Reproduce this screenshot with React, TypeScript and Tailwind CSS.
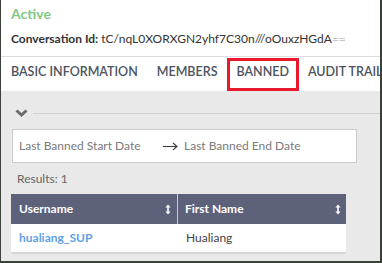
import React from "react";

const TABS = ["BASIC INFORMATION", "MEMBERS", "BANNED", "AUDIT TRAIL"];
const ACTIVE_TAB = "BANNED";

function SortIcon() {
  return (
    <svg width="6" height="11" viewBox="0 0 6 11" className="shrink-0">
      <path d="M3 0.5 L5.6 3.6 L0.4 3.6 Z" fill="#fff" />
      <path d="M3 10.5 L5.6 7.4 L0.4 7.4 Z" fill="#fff" />
      <rect x="2.2" y="3" width="1.6" height="5" fill="#fff" />
    </svg>
  );
}

function Chevron() {
  return (
    <svg width="13" height="8" viewBox="0 0 13 8">
      <path
        d="M1.5 1.5 L6.5 6 L11.5 1.5"
        fill="none"
        stroke="#6b6b6b"
        strokeWidth="3"
        strokeLinejoin="miter"
      />
    </svg>
  );
}

function RangeArrow() {
  return (
    <svg width="15" height="8" viewBox="0 0 15 8">
      <path d="M0 4.5 H14" stroke="#3d3d3d" strokeWidth="1.1" />
      <path d="M10 1 L14 4.5 L10 8" fill="none" stroke="#3d3d3d" strokeWidth="1.1" />
    </svg>
  );
}

export default function App() {
  return (
    <div
      className="flex h-[263px] w-[382px] flex-col overflow-hidden border-b-2 border-l border-r-2 border-[#3b4139] bg-white"
      style={{ fontFamily: "Lato, 'Open Sans', sans-serif" }}
    >
      {/* Header */}
      <div className="pl-[10px] pt-[4px]">
        <div className="text-[14px] font-bold leading-[20px] text-[#80c983]">Active</div>
        <div className="mt-[6px] whitespace-nowrap text-[12px] leading-[18px] text-[#333]">
          <span className="font-bold">Conversation Id:</span>{" "}
          <span>tC/nqL0XORXGN2yhf7C30n///oOuxzHGdA</span>
          <span className="text-[#c4c4c4]">==</span>
        </div>
      </div>

      {/* Tabs */}
      <div className="mt-[8px] flex h-[35px] shrink-0 border-t border-[#dedede] whitespace-nowrap">
        {TABS.map((tab, i) => (
          <div
            key={tab}
            className={
              i === 0
                ? "relative pl-[10px] pr-[9.5px] pt-[7px] text-[12.5px] font-semibold leading-[16px] text-[#4c5260]"
                : "relative px-[9.5px] pt-[7px] text-[12.5px] font-semibold leading-[16px] text-[#4c5260]"
            }
          >
            {tab}
            {tab === ACTIVE_TAB && (
              <span className="absolute inset-x-0 top-[1px] bottom-0 border-[3px] border-[#e8192c]" />
            )}
          </div>
        ))}
      </div>

      {/* Banned panel */}
      <div className="flex flex-1 flex-col bg-[#e9e9e9]">
        <div className="mt-[18px] flex items-center pl-[14px]">
          <Chevron />
          <div className="ml-[5px] h-px flex-1 bg-[#cfcfcf]" />
        </div>

        <div className="ml-[11px] mt-[12px] flex h-[34px] w-[345px] items-center border border-[#cccccc] bg-white pl-[6px] text-[12px] text-[#7a7a7a]">
          <span className="w-[144px]">Last Banned Start Date</span>
          <RangeArrow />
          <span className="ml-[6px]">Last Banned End Date</span>
        </div>

        <div className="ml-[16px] mt-[8px] text-[12px] leading-[16px] text-[#666]">Results: 1</div>

        <div className="ml-[10px] mt-[7px] w-[335px]">
          <div className="flex h-[30px] bg-[#5d6179] text-[12px] font-bold text-white">
            <div className="flex w-[167px] items-center justify-between border-r border-[#c9cad2] pl-[8px] pr-[6px]">
              <span>Username</span>
              <SortIcon />
            </div>
            <div className="flex flex-1 items-center justify-between pl-[7px] pr-[5px]">
              <span>First Name</span>
              <SortIcon />
            </div>
          </div>
          <div className="flex h-[30px] items-center border-b-2 border-[#d6d6d6] bg-white text-[12px]">
            <div className="w-[168px] pl-[8px] font-bold text-[#5ea1ea]">hualiang_SUP</div>
            <div className="pl-[7px] text-[#444]">Hualiang</div>
          </div>
        </div>
      </div>
    </div>
  );
}
